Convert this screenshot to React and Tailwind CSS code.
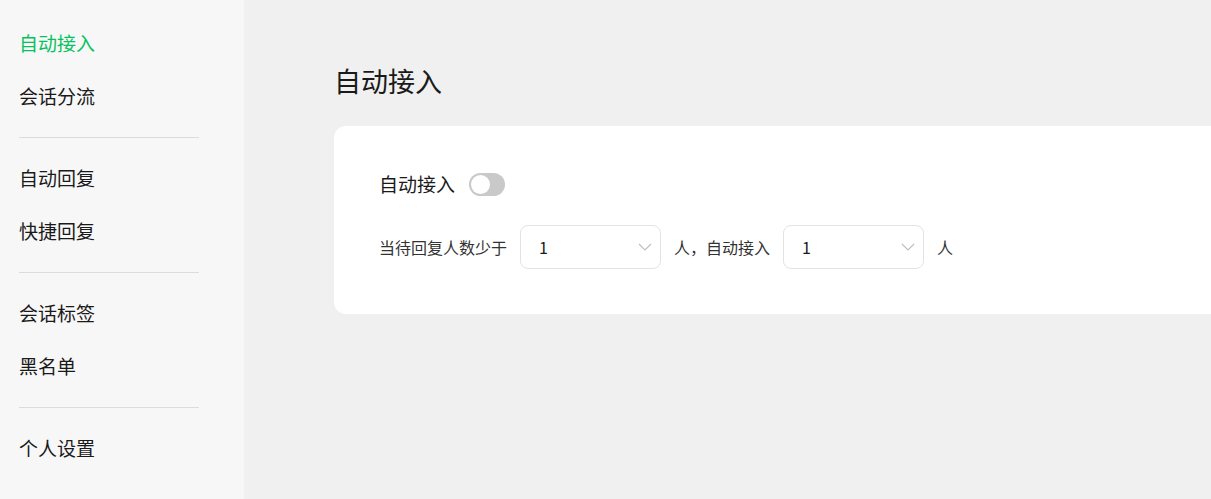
import React from "react";

const font = { fontFamily: '"Noto Sans CJK SC", "Noto Sans", sans-serif' };

function Chevron() {
  return (
    <svg width="14" height="8" viewBox="0 0 14 8" fill="none">
      <polyline points="1,1 7,7 13,1" stroke="#bdbdbd" strokeWidth="1.1" fill="none" />
    </svg>
  );
}

function Select({ value }) {
  return (
    <div className="flex h-[44px] w-[141px] items-center justify-between rounded-[8px] border border-[#e3e3e3] bg-white pl-[18px] pr-[8px]">
      <span className="text-[16px] text-[#1a1a1a]">{value}</span>
      <Chevron />
    </div>
  );
}

function NavItem({ label, active }) {
  return (
    <div
      className={
        "flex h-[53px] items-center pl-[19px] text-[19px] " +
        (active ? "text-[#07c160]" : "text-[#1a1a1a]")
      }
    >
      {label}
    </div>
  );
}

function Divider() {
  return <div className="my-[14px] ml-[19px] h-px w-[180px] bg-[#dcdcdc]" />;
}

export default function App() {
  return (
    <div className="flex h-[499px] w-[1211px] overflow-hidden bg-[#f0f0f0]" style={font}>
      <aside className="flex w-[244px] shrink-0 flex-col bg-[#f7f7f7] pt-[17px]">
        <NavItem label="自动接入" active />
        <NavItem label="会话分流" />
        <Divider />
        <NavItem label="自动回复" />
        <NavItem label="快捷回复" />
        <Divider />
        <NavItem label="会话标签" />
        <NavItem label="黑名单" />
        <Divider />
        <NavItem label="个人设置" />
      </aside>
      <main className="flex min-w-0 flex-1 flex-col pl-[90px] pt-[62px]">
        <h1 className="h-[38px] text-[27px] font-normal leading-[38px] text-[#1a1a1a]">自动接入</h1>
        <div className="mt-[26px] w-[1000px] rounded-l-[12px] bg-white pb-[45px] pl-[45px] pt-[46px]">
          <div className="flex h-[24px] items-center">
            <span className="text-[19px] text-[#1a1a1a]">自动接入</span>
            <div className="ml-[14px] flex h-[23px] w-[36px] items-center rounded-full bg-[#c9c9c9] px-[2px]">
              <div className="h-[19px] w-[19px] rounded-full bg-white" />
            </div>
          </div>
          <div className="mt-[29px] flex items-center gap-[13px] text-[16px] text-[#333333]">
            <span>当待回复人数少于</span>
            <Select value="1" />
            <span>人，自动接入</span>
            <Select value="1" />
            <span>人</span>
          </div>
        </div>
      </main>
    </div>
  );
}
